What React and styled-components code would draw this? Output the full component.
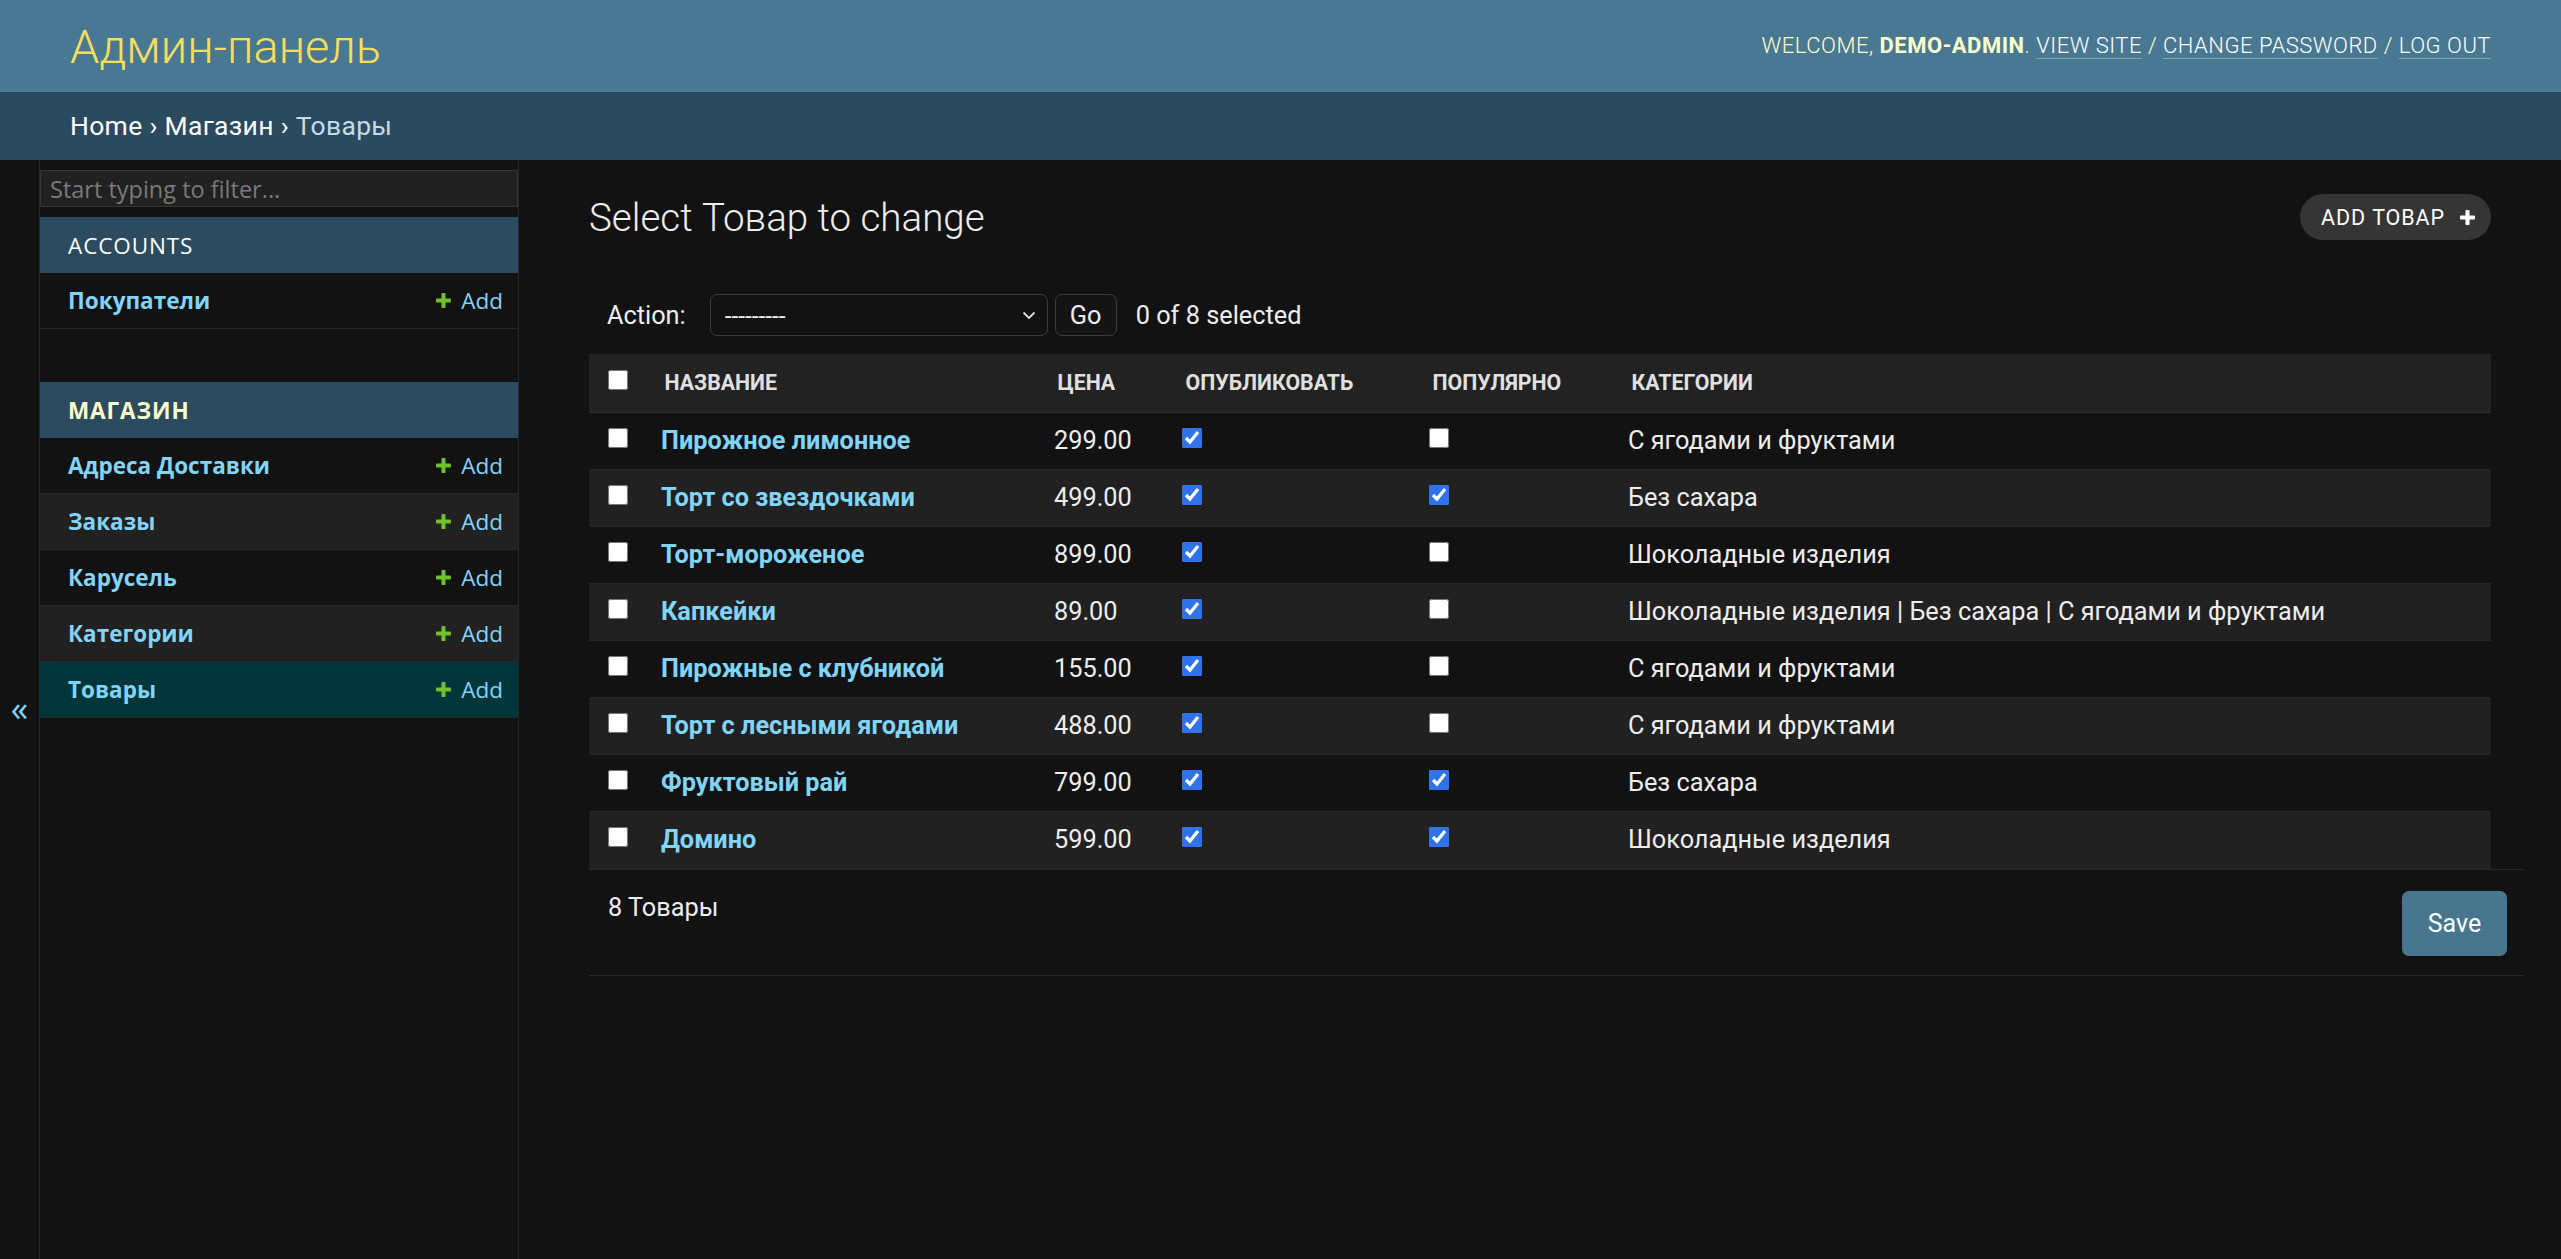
import React from "react";
import styled, { createGlobalStyle } from "styled-components";

const GlobalStyle = createGlobalStyle`
  * { box-sizing: border-box; }
  html, body {
    margin: 0;
    padding: 0;
    background: #121212;
  }
  body {
    font-family: Roboto, "Liberation Sans", Arial, sans-serif;
    font-size: 25.3px;
    color: #eeeeee;
  }
  #root {
    height: 100vh;
    display: flex;
    flex-direction: column;
  }
`;

const Header = styled.header`
  height: 92px;
  flex-shrink: 0;
  background: #497892;
  display: flex;
  align-items: center;
  justify-content: space-between;
  padding: 0 70px;
`;

const Branding = styled.h1`
  margin: 0;
  font-size: 47px;
  line-height: 1;
  font-weight: 300;
  color: #f5dd5d;
`;

const UserTools = styled.div`
  font-size: 22px;
  line-height: 1;
  font-weight: 300;
  text-transform: uppercase;
  letter-spacing: 0.5px;
  color: #ffffcc;

  strong {
    font-weight: 700;
  }
`;

const UserLink = styled.a`
  color: #ffffff;
  text-decoration: none;
  border-bottom: 1px solid rgba(255, 255, 255, 0.3);
`;

const Breadcrumbs = styled.div`
  height: 68px;
  flex-shrink: 0;
  background: #2c4a5e;
  display: flex;
  align-items: center;
  padding: 0 70px;
  font-size: 26.5px;
  letter-spacing: 0.3px;
  line-height: 1;
  color: #ffffff;
  white-space: pre;
`;

const Crumb = styled.a`
  color: #ffffff;
  text-decoration: none;
`;

const CurrentCrumb = styled.span`
  color: #c4dce8;
`;

const Main = styled.div`
  flex: 1;
  display: flex;
  min-height: 0;
`;

const Toggle = styled.button`
  width: 40px;
  flex-shrink: 0;
  border: 0;
  border-right: 1px solid #272727;
  background: #121212;
  color: #81d4fa;
  font-family: "Open Sans", "Noto Sans", sans-serif;
  font-size: 35px;
  padding: 0 0 4px 0;
  display: flex;
  align-items: center;
  justify-content: center;
`;

const Sidebar = styled.nav`
  width: 479px;
  flex-shrink: 0;
  border-right: 1px solid #272727;
  font-family: "Open Sans", "Noto Sans", sans-serif;
`;

const FilterInput = styled.input`
  display: block;
  width: 100%;
  height: 37px;
  margin: 10px 0;
  padding: 0 9px;
  background: #212121;
  border: 1px solid #353535;
  color: #eeeeee;
  font-family: "Open Sans", "Noto Sans", sans-serif;
  font-size: 23.5px;

  &::placeholder {
    color: #7a7a7a;
  }
`;

const AppModule = styled.div`
  margin-bottom: 53px;
`;

const Caption = styled.div`
  height: 56px;
  display: flex;
  align-items: center;
  padding: 0 28px;
  background: #2c4b5f;
  font-size: 22.5px;
  letter-spacing: 0.9px;
  text-transform: uppercase;
  color: ${(p) => (p.$current ? "#ffffcc" : "#ffffff")};
  font-weight: ${(p) => (p.$current ? 700 : 400)};
`;

const ModelRow = styled.div`
  height: 56px;
  display: flex;
  align-items: center;
  justify-content: space-between;
  padding: 0 15px 0 28px;
  border-bottom: 1px solid #272727;
  background: ${(p) => (p.$selected ? "#00363a" : p.$alt ? "#212121" : "#121212")};
`;

const ModelName = styled.a`
  color: #81d4fa;
  font-weight: 700;
  font-size: 22.5px;
  text-decoration: none;
`;

const AddLink = styled.a`
  display: flex;
  align-items: center;
  gap: 8px;
  color: #81d4fa;
  font-size: 22.5px;
  text-decoration: none;
`;

const Content = styled.div`
  flex: 1;
  min-width: 0;
  padding: 35px 70px;
`;

const TitleRow = styled.div`
  display: flex;
  justify-content: space-between;
  align-items: flex-start;
  margin-bottom: 35px;
`;

const Title = styled.h1`
  margin: 0;
  font-size: 38.5px;
  line-height: 46px;
  font-weight: 300;
  color: #eeeeee;
`;

const AddButton = styled.a`
  height: 46px;
  margin-top: -1px;
  display: flex;
  align-items: center;
  gap: 13px;
  padding: 0 14px 0 21px;
  border-radius: 23px;
  background: #353535;
  color: #ffffff;
  font-size: 21.5px;
  letter-spacing: 0.9px;
  text-transform: uppercase;
  text-decoration: none;
`;

const Actions = styled.div`
  height: 78px;
  display: flex;
  align-items: center;
  padding: 0 18px;
`;

const ActionLabel = styled.span`
  margin-right: 24px;
`;

const SelectBox = styled.div`
  width: 338px;
  height: 42px;
  display: flex;
  align-items: center;
  justify-content: space-between;
  padding: 0 11px 0 14px;
  border: 1px solid #3d3d3d;
  border-radius: 7px;
  background: #121212;
  font-size: 24.5px;
`;

const GoButton = styled.button`
  width: 62px;
  height: 42px;
  margin-left: 7px;
  margin-right: 19px;
  border: 1px solid #3d3d3d;
  border-radius: 7px;
  background: #141414;
  color: #eeeeee;
  font-family: Roboto, sans-serif;
  font-size: 25.3px;
  padding: 0;
`;

const Table = styled.table`
  width: 100%;
  table-layout: fixed;
  border-collapse: collapse;
`;

const HeadCell = styled.th`
  height: 58px;
  padding: 0 17.5px;
  background: #222222;
  border-bottom: 1px solid #2b2b2b;
  text-align: ${(p) => (p.$center ? "center" : "left")};
  font-size: 21.3px;
  font-weight: 700;
  text-transform: uppercase;
  color: #e0e0e0;
  vertical-align: middle;
  white-space: nowrap;
`;

const Row = styled.tr`
  background: #121212;

  &:nth-child(even) {
    background: #212121;
  }
`;

const Cell = styled.td`
  height: 57px;
  padding: 0 14px;
  border-bottom: 1px solid #272727;
  vertical-align: middle;
  text-align: ${(p) => (p.$center ? "center" : "left")};
  white-space: nowrap;
`;

const NameLink = styled.a`
  color: #81d4fa;
  font-weight: 700;
  text-decoration: none;
`;

const Check = styled.input`
  display: block;
  width: 20px;
  height: 20px;
  margin: -5px ${(p) => (p.$center ? "auto" : "0")} 0;
  accent-color: #2f72ea;
`;

const Paginator = styled.div`
  width: calc(100% + 33px);
  display: flex;
  justify-content: space-between;
  align-items: flex-start;
  padding: 21px 17px 19px 19px;
  border-top: 1px solid #272727;
  border-bottom: 1px solid #2a2a2a;
`;

const Count = styled.span`
  margin-top: 4px;
  line-height: 1;
`;

const SaveButton = styled.button`
  width: 105px;
  height: 65px;
  border: 0;
  border-radius: 7px;
  background: #48768f;
  color: #ffffff;
  font-family: Roboto, sans-serif;
  font-size: 25px;
  padding: 0;
`;

function PlusIcon({ color, size }) {
  return (
    <svg width={size} height={size} viewBox="0 0 1792 1792" aria-hidden="true">
      <path
        fill={color}
        d="M1600 796v192q0 40-28 68t-68 28h-416v416q0 40-28 68t-68 28h-192q-40 0-68-28t-28-68v-416h-416q-40 0-68-28t-28-68v-192q0-40 28-68t68-28h416v-416q0-40 28-68t68-28h192q40 0 68 28t28 68v416h416q40 0 68 28t28 68z"
      />
    </svg>
  );
}

function Chevron() {
  return (
    <svg width="14" height="9" viewBox="0 0 14 9" aria-hidden="true">
      <path d="M1.5 1.5 L7 7 L12.5 1.5" fill="none" stroke="#dddddd" strokeWidth="1.8" />
    </svg>
  );
}

const shopModels = ["Адреса Доставки", "Заказы", "Карусель", "Категории", "Товары"];

const products = [
  { name: "Пирожное лимонное", price: "299.00", published: true, popular: false, cats: "С ягодами и фруктами" },
  { name: "Торт со звездочками", price: "499.00", published: true, popular: true, cats: "Без сахара" },
  { name: "Торт-мороженое", price: "899.00", published: true, popular: false, cats: "Шоколадные изделия" },
  { name: "Капкейки", price: "89.00", published: true, popular: false, cats: "Шоколадные изделия | Без сахара | С ягодами и фруктами" },
  { name: "Пирожные с клубникой", price: "155.00", published: true, popular: false, cats: "С ягодами и фруктами" },
  { name: "Торт с лесными ягодами", price: "488.00", published: true, popular: false, cats: "С ягодами и фруктами" },
  { name: "Фруктовый рай", price: "799.00", published: true, popular: true, cats: "Без сахара" },
  { name: "Домино", price: "599.00", published: true, popular: true, cats: "Шоколадные изделия" },
];

export default function App() {
  return (
    <>
      <GlobalStyle />
      <Header>
        <Branding>Админ-панель</Branding>
        <UserTools>
          Welcome, <strong>demo-admin</strong>. <UserLink>View site</UserLink> /{" "}
          <UserLink>Change password</UserLink> / <UserLink>Log out</UserLink>
        </UserTools>
      </Header>
      <Breadcrumbs>
        <Crumb>Home</Crumb> › <Crumb>Магазин</Crumb> › <CurrentCrumb>Товары</CurrentCrumb>
      </Breadcrumbs>
      <Main>
        <Toggle>«</Toggle>
        <Sidebar>
          <FilterInput placeholder="Start typing to filter..." />
          <AppModule>
            <Caption>Accounts</Caption>
            <ModelRow>
              <ModelName>Покупатели</ModelName>
              <AddLink>
                <PlusIcon color="#70bf2b" size={19} />
                Add
              </AddLink>
            </ModelRow>
          </AppModule>
          <AppModule>
            <Caption $current>Магазин</Caption>
            {shopModels.map((m, i) => (
              <ModelRow key={m} $alt={i % 2 === 1} $selected={m === "Товары"}>
                <ModelName>{m}</ModelName>
                <AddLink>
                  <PlusIcon color="#70bf2b" size={19} />
                  Add
                </AddLink>
              </ModelRow>
            ))}
          </AppModule>
        </Sidebar>
        <Content>
          <TitleRow>
            <Title>Select Товар to change</Title>
            <AddButton>
              Add Товар
              <PlusIcon color="#ffffff" size={19} />
            </AddButton>
          </TitleRow>
          <Actions>
            <ActionLabel>Action:</ActionLabel>
            <SelectBox>
              <span>---------</span>
              <Chevron />
            </SelectBox>
            <GoButton>Go</GoButton>
            <span>0 of 8 selected</span>
          </Actions>
          <Table>
            <colgroup>
              <col style={{ width: 58 }} />
              <col style={{ width: 393 }} />
              <col style={{ width: 128 }} />
              <col style={{ width: 247 }} />
              <col style={{ width: 199 }} />
              <col />
            </colgroup>
            <thead>
              <tr>
                <HeadCell $center>
                  <Check type="checkbox" $center />
                </HeadCell>
                <HeadCell>Название</HeadCell>
                <HeadCell>Цена</HeadCell>
                <HeadCell>Опубликовать</HeadCell>
                <HeadCell>Популярно</HeadCell>
                <HeadCell>Категории</HeadCell>
              </tr>
            </thead>
            <tbody>
              {products.map((p) => (
                <Row key={p.name}>
                  <Cell $center>
                    <Check type="checkbox" $center />
                  </Cell>
                  <Cell>
                    <NameLink>{p.name}</NameLink>
                  </Cell>
                  <Cell>{p.price}</Cell>
                  <Cell>
                    <Check type="checkbox" defaultChecked={p.published} />
                  </Cell>
                  <Cell>
                    <Check type="checkbox" defaultChecked={p.popular} />
                  </Cell>
                  <Cell>{p.cats}</Cell>
                </Row>
              ))}
            </tbody>
          </Table>
          <Paginator>
            <Count>8 Товары</Count>
            <SaveButton>Save</SaveButton>
          </Paginator>
        </Content>
      </Main>
    </>
  );
}
